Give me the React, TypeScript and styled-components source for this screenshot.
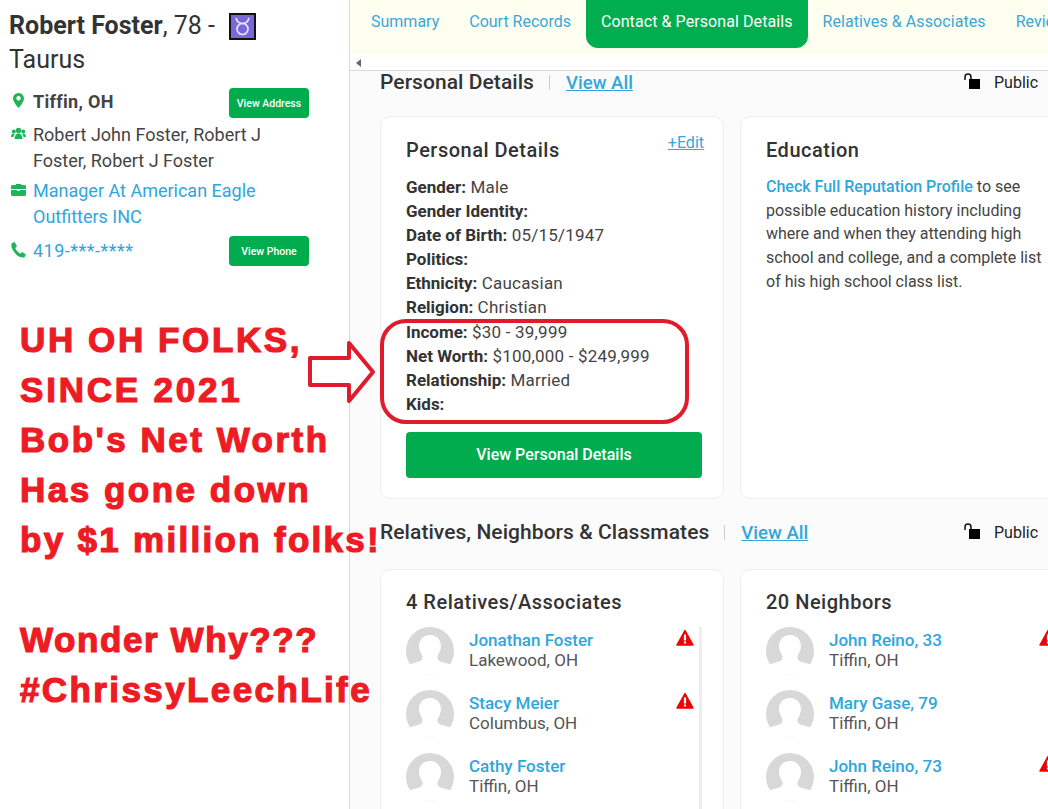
import styled, { createGlobalStyle } from "styled-components"

const GlobalStyle = createGlobalStyle`
  html, body {
    margin: 0;
    padding: 0;
    background: #fff;
    font-family: Roboto, "Liberation Sans", sans-serif;
    color: #333;
    overflow: hidden;
  }
`

const Page = styled.div`
  position: relative;
  width: 1048px;
  height: 809px;
  display: flex;
  overflow: hidden;
`

const Sidebar = styled.aside`
  width: 350px;
  flex: none;
  box-sizing: border-box;
  border-right: 1px solid #d8d8d8;
  padding: 9px 9px 0;
  background: #fff;
`

const Name = styled.h1`
  margin: 0 0 11px;
  font-size: 25px;
  line-height: 34px;
  font-weight: 400;
  color: #333;
  b { font-weight: 700; }
`

const Zodiac = styled.span`
  display: inline-flex;
  align-items: center;
  justify-content: center;
  width: 27px;
  height: 27px;
  box-sizing: border-box;
  margin-left: 8px;
  border: 2px solid #111;
  background: #7a67d8;
  vertical-align: -2px;
`

const InfoRow = styled.div<{ $top?: number }>`
  display: flex;
  align-items: flex-start;
  width: 300px;
  margin-top: ${(p) => p.$top ?? 0}px;
  margin-bottom: 4px;
`

const InfoIcon = styled.span`
  flex: none;
  width: 24px;
  display: flex;
  justify-content: center;
  padding-top: 5px;
  padding-right: 6px;
  box-sizing: border-box;
  color: #1fb457;
`

const InfoText = styled.div<{ $link?: boolean; $bold?: boolean }>`
  flex: 1;
  font-size: 18px;
  line-height: 26px;
  font-weight: ${(p) => (p.$bold ? 700 : 400)};
  letter-spacing: ${(p) => (p.$bold ? "0.3px" : "0")};
  padding-top: ${(p) => (p.$bold ? "1px" : "0")};
  color: ${(p) => (p.$link ? "#2fa6dc" : "#444")};
`

const PhoneNumber = styled(InfoText)`
  padding-top: 2px;
  letter-spacing: 0.5px;
`

const SmallButton = styled.div`
  flex: none;
  width: 80px;
  height: 30px;
  border-radius: 4px;
  background: #00ac4e;
  color: #fff;
  font-size: 10.5px;
  font-weight: 500;
  display: flex;
  align-items: center;
  justify-content: center;
`

const Main = styled.main`
  flex: 1;
  min-width: 0;
  background: #fbfbfb;
`

const Tabs = styled.nav`
  height: 55px;
  background: #fffff0;
  display: flex;
  padding-left: 6px;
  white-space: nowrap;
  overflow: hidden;
`

const Tab = styled.div<{ $active?: boolean; $spaced?: boolean }>`
  flex: none;
  height: 48px;
  padding: 0 15px;
  box-sizing: border-box;
  line-height: 43px;
  font-size: 16px;
  letter-spacing: ${(p) => (p.$spaced ? "0.08px" : "0")};
  color: ${(p) => (p.$active ? "#fff" : "#3aa6da")};
  background: ${(p) => (p.$active ? "#00ae4f" : "transparent")};
  border-radius: 0 0 12px 12px;
`

const ScrollRow = styled.div`
  height: 15px;
  background: #fff;
  border-bottom: 1px solid #d7d9e0;
  padding-left: 6px;
  display: flex;
  align-items: center;
`

const ScrollArrow = styled.span`
  width: 0;
  height: 0;
  border-top: 4px solid transparent;
  border-bottom: 4px solid transparent;
  border-right: 5px solid #666;
`

const Content = styled.div`
  padding-left: 30px;
`

const SectionHeader = styled.div<{ $top: number }>`
  display: flex;
  align-items: center;
  height: 23px;
  margin-top: ${(p) => p.$top}px;
`

const SectionTitle = styled.h2`
  margin: 0;
  font-size: 21px;
  line-height: 23px;
  font-weight: 500;
  letter-spacing: 0.06px;
  color: #333;
`

const Divider = styled.span`
  width: 1px;
  height: 15px;
  background: #ccc;
  margin: 0 16px 0 15px;
`

const ViewAll = styled.a`
  font-size: 18.6px;
  font-weight: 500;
  color: #35a6dc;
  text-decoration: underline;
`

const Privacy = styled.div`
  margin-left: auto;
  width: 84px;
  flex: none;
  display: flex;
  align-items: center;
  gap: 13px;
  font-size: 16px;
  color: #222;
  white-space: nowrap;
`

const CardRow = styled.div<{ $top: number }>`
  display: flex;
  gap: 16px;
  width: 704px;
  margin-top: ${(p) => p.$top}px;
`

const Card = styled.section<{ $height: number; $padTop: number }>`
  position: relative;
  flex: none;
  width: 344px;
  height: ${(p) => p.$height}px;
  box-sizing: border-box;
  background: #fff;
  border: 1px solid #eeeeee;
  border-radius: 10px;
  padding: ${(p) => p.$padTop}px 25px 0;
`

const CardTitle = styled.h3`
  margin: 0 0 13px;
  font-size: 20px;
  line-height: 24px;
  font-weight: 500;
  letter-spacing: 0.5px;
  color: #333;
`

const EditLink = styled.a`
  position: absolute;
  top: 16px;
  right: 19px;
  font-size: 16px;
  color: #35a6dc;
  text-decoration: underline;
`

const Detail = styled.div`
  font-size: 17px;
  line-height: 24.1px;
  letter-spacing: 0.2px;
  white-space: nowrap;
  color: #444;
  b { font-weight: 700; color: #333; letter-spacing: 0; }
`

const WideButton = styled.div`
  margin-top: 16px;
  height: 46px;
  width: 296px;
  border-radius: 4px;
  background: #00ac4e;
  color: #fff;
  font-size: 16px;
  font-weight: 500;
  display: flex;
  align-items: center;
  justify-content: center;
`

const Blurb = styled.p`
  margin: 0;
  font-size: 16px;
  line-height: 23.7px;
  color: #444;
  b { color: #2fa6dc; font-weight: 500; }
`

const PersonList = styled.div<{ $rail?: boolean }>`
  width: 296px;
  height: 200px;
  box-sizing: border-box;
  border-right: ${(p) => (p.$rail ? "3px solid #eee" : "none")};
`

const Person = styled.div`
  position: relative;
  display: flex;
  gap: 15px;
  height: 63px;
`

const Avatar = styled.svg`
  flex: none;
  width: 48px;
  height: 48px;
`

const PersonText = styled.div`
  padding-top: 3px;
`

const PersonName = styled.div`
  font-size: 17px;
  line-height: 20px;
  font-weight: 500;
  color: #2fa6dc;
`

const PersonCity = styled.div`
  font-size: 17px;
  line-height: 20px;
  color: #555;
`

const Warning = styled.svg`
  position: absolute;
  top: 2px;
  right: 5px;
  width: 18px;
  height: 17px;
`

const Overlay = styled.div`
  position: absolute;
  left: 20px;
  top: 315px;
  font-family: "Liberation Sans", Arial, sans-serif;
  font-size: 35px;
  line-height: 50px;
  font-weight: 700;
  -webkit-text-stroke: 1.2px #ed1c24;
  color: #ed1c24;
  white-space: nowrap;
`

const OverlayLine = styled.div<{ $spacing: number }>`
  letter-spacing: ${(p) => p.$spacing}px;
`

const OverlayGap = styled.div`
  height: 50px;
`

const RedBox = styled.div`
  position: absolute;
  left: 380px;
  top: 319px;
  width: 309px;
  height: 105px;
  box-sizing: border-box;
  border: 4px solid #e01b2c;
  border-radius: 26px;
`

const RedArrow = styled.svg`
  position: absolute;
  left: 308px;
  top: 340px;
  width: 68px;
  height: 64px;
`

const PersonRow = ({ name, city, warn }: { name: string; city: string; warn?: boolean }) => (
  <Person>
    <Avatar viewBox="0 0 48 48">
      <circle cx="24" cy="24" r="24" fill="#d8d8d8" />
      <path
        d="M24 8c-7 0-11 5-11 11 0 5 3 8 3.500 11 .3 2-1 3.500-3 4.500L3 37.500C7 44 15 48 24 48s17-4 21-10.500l-10.500-3c-2-1-3.300-2.500-3-4.500.5-3 3.500-6 3.500-11 0-6-4.500-11-10.500-11z"
        fill="#fff"
      />
    </Avatar>
    <PersonText>
      <PersonName>{name}</PersonName>
      <PersonCity>{city}</PersonCity>
    </PersonText>
    {warn && (
      <Warning viewBox="0 0 18 17">
        <path d="M9 1.500 17 16H1z" fill="#f00000" stroke="#f00000" strokeWidth="1.500" strokeLinejoin="round" />
        <rect x="7.900" y="5.500" width="2.200" height="6" fill="#fff" />
        <rect x="7.900" y="12.500" width="2.200" height="2" fill="#fff" />
      </Warning>
    )}
  </Person>
)

const LockIcon = () => (
  <svg width="17" height="20" viewBox="0 0 17 20">
    <path d="M1 7V4a3 3 0 0 1 6 0v3" fill="none" stroke="#111" strokeWidth="1.500" />
    <rect x="5" y="6" width="11" height="10" fill="#000" />
  </svg>
)

const App = () => {
  return (
    <Page>
      <GlobalStyle />

      <Sidebar>
        <Name>
          <b>Robert Foster</b>, 78 -{" "}
          <Zodiac>
            <svg width="17" height="19" viewBox="0 0 17 19" fill="none" stroke="#e8e4ff" strokeWidth="1.700">
              <circle cx="8.500" cy="12" r="5.500" />
              <path d="M2 1c1 4 3.500 5.500 6.500 5.500S14 5 15 1" />
            </svg>
          </Zodiac>
          <br />
          Taurus
        </Name>

        <InfoRow>
          <InfoIcon>
            <svg width="11" height="15" viewBox="0 0 11 15">
              <path
                fillRule="evenodd"
                d="M5.500 0A5.400 5.400 0 0 0 0 5.400C0 9 5.500 15 5.500 15S11 9 11 5.400A5.400 5.400 0 0 0 5.500 0zm0 7.500a2.200 2.200 0 1 1 0-4.400 2.200 2.200 0 0 1 0 4.400z"
                fill="currentColor"
              />
            </svg>
          </InfoIcon>
          <InfoText $bold>Tiffin, OH</InfoText>
          <SmallButton>View Address</SmallButton>
        </InfoRow>

        <InfoRow>
          <InfoIcon>
            <svg width="15" height="13" viewBox="0 0 15 13" fill="currentColor">
              <circle cx="7.500" cy="3.500" r="2.700" />
              <circle cx="2.800" cy="4.500" r="2" />
              <circle cx="12.200" cy="4.500" r="2" />
              <path d="M3.500 12c0-3.500 1.500-5.500 4-5.500s4 2 4 5.500z" />
              <path d="M0 10c0-2 1-3.500 2.500-3.500.5 0 1 .2 1.300.5C3 8 2.600 9 2.500 10zM15 10c0-2-1-3.500-2.500-3.500-.5 0-1 .2-1.300.5.8 1 1.200 2 1.300 3z" />
            </svg>
          </InfoIcon>
          <InfoText>Robert John Foster, Robert J Foster, Robert J Foster</InfoText>
        </InfoRow>

        <InfoRow>
          <InfoIcon>
            <svg width="15" height="13" viewBox="0 0 15 13" fill="currentColor">
              <path d="M5 2V1h5v1h3.500A1.500 1.500 0 0 1 15 3.500V6H0V3.500A1.500 1.500 0 0 1 1.500 2z" />
              <path d="M0 7h6v1h3V7h6v4.500a1.500 1.500 0 0 1-1.500 1.500h-12A1.500 1.500 0 0 1 0 11.500z" />
            </svg>
          </InfoIcon>
          <InfoText $link>Manager At American Eagle Outfitters INC</InfoText>
        </InfoRow>

        <InfoRow $top={6}>
          <InfoIcon>
            <svg width="17" height="17" viewBox="0 0 24 24" fill="currentColor">
              <path d="M6.600 1.500 2.400 3C1 6 2 11 7 17s10 7 13.500 6l2-4-5.500-3.500-2.500 2.500c-2-.7-6.500-5.500-7-8l2.300-2.500z" />
            </svg>
          </InfoIcon>
          <PhoneNumber $link>419-***-****</PhoneNumber>
          <SmallButton>View Phone</SmallButton>
        </InfoRow>
      </Sidebar>

      <Main>
        <Tabs>
          <Tab>Summary</Tab>
          <Tab>Court Records</Tab>
          <Tab $active $spaced>Contact &amp; Personal Details</Tab>
          <Tab $spaced>Relatives &amp; Associates</Tab>
          <Tab>Reviews</Tab>
        </Tabs>
        <ScrollRow>
          <ScrollArrow />
        </ScrollRow>

        <Content>
          <SectionHeader $top={0}>
            <SectionTitle>Personal Details</SectionTitle>
            <Divider />
            <ViewAll>View All</ViewAll>
            <Privacy>
              <LockIcon />
              Public
            </Privacy>
          </SectionHeader>

          <CardRow $top={22}>
            <Card $height={383} $padTop={21}>
              <CardTitle>Personal Details</CardTitle>
              <EditLink>+Edit</EditLink>
              <Detail><b>Gender:</b> Male</Detail>
              <Detail><b>Gender Identity:</b></Detail>
              <Detail><b>Date of Birth:</b> 05/15/1947</Detail>
              <Detail><b>Politics:</b></Detail>
              <Detail><b>Ethnicity:</b> Caucasian</Detail>
              <Detail><b>Religion:</b> Christian</Detail>
              <Detail><b>Income:</b> $30 - 39,999</Detail>
              <Detail><b>Net Worth:</b> $100,000 - $249,999</Detail>
              <Detail><b>Relationship:</b> Married</Detail>
              <Detail><b>Kids:</b></Detail>
              <WideButton>View Personal Details</WideButton>
            </Card>
            <Card $height={383} $padTop={21}>
              <CardTitle>Education</CardTitle>
              <Blurb>
                <b>Check Full Reputation Profile</b> to see possible education history including
                where and when they attending high school and college, and a complete list of his
                high school class list.
              </Blurb>
            </Card>
          </CardRow>

          <SectionHeader $top={22}>
            <SectionTitle>Relatives, Neighbors &amp; Classmates</SectionTitle>
            <Divider />
            <ViewAll>View All</ViewAll>
            <Privacy>
              <LockIcon />
              Public
            </Privacy>
          </SectionHeader>

          <CardRow $top={25}>
            <Card $height={300} $padTop={20}>
              <CardTitle>4 Relatives/Associates</CardTitle>
              <PersonList $rail>
                <PersonRow name="Jonathan Foster" city="Lakewood, OH" warn />
                <PersonRow name="Stacy Meier" city="Columbus, OH" warn />
                <PersonRow name="Cathy Foster" city="Tiffin, OH" />
              </PersonList>
            </Card>
            <Card $height={300} $padTop={20}>
              <CardTitle>20 Neighbors</CardTitle>
              <PersonList>
                <PersonRow name="John Reino, 33" city="Tiffin, OH" warn />
                <PersonRow name="Mary Gase, 79" city="Tiffin, OH" />
                <PersonRow name="John Reino, 73" city="Tiffin, OH" warn />
              </PersonList>
            </Card>
          </CardRow>
        </Content>
      </Main>

      <Overlay>
        <OverlayLine $spacing={2.6}>UH OH FOLKS,</OverlayLine>
        <OverlayLine $spacing={2.8}>SINCE 2021</OverlayLine>
        <OverlayLine $spacing={2.5}>Bob's Net Worth</OverlayLine>
        <OverlayLine $spacing={2.5}>Has gone down</OverlayLine>
        <OverlayLine $spacing={2.3}>by $1 million folks!</OverlayLine>
        <OverlayGap />
        <OverlayLine $spacing={1.6}>Wonder Why???</OverlayLine>
        <OverlayLine $spacing={2.4}>#ChrissyLeechLife</OverlayLine>
      </Overlay>

      <RedBox />
      <RedArrow viewBox="0 0 68 64">
        <path d="M2 18h39V3l24 29-24 29V45H2z" fill="#fff" stroke="#e01b2c" strokeWidth="4" strokeLinejoin="round" />
      </RedArrow>
    </Page>
  )
}

export default App
